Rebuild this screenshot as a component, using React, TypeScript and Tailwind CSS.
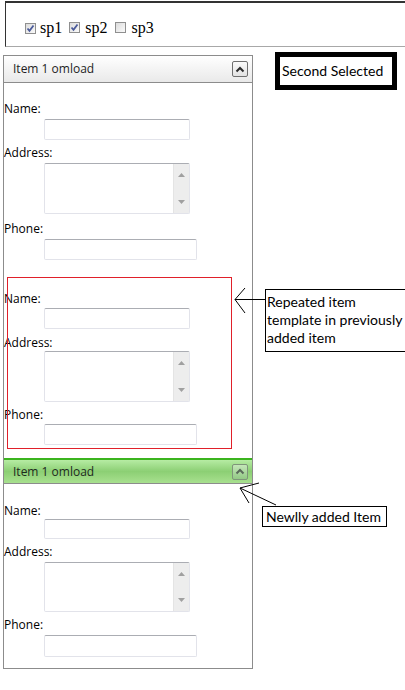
import React from "react";

const sans = { fontFamily: '"Open Sans", "Noto Sans", sans-serif' };

function Check({ checked }: { checked: boolean }) {
  return (
    <span className="relative inline-block w-[11px] h-[11px] border border-[#8f8f8f] bg-gradient-to-br from-[#dcdcdc] to-[#fafafa] shrink-0">
      {checked && (
        <svg className="absolute left-0 top-0" width="9" height="9" viewBox="0 0 9 9">
          <path d="M1.5 4.5 L3.5 6.8 L7.5 1.5" fill="none" stroke="#4a5a9a" strokeWidth="1.8" />
        </svg>
      )}
    </span>
  );
}

function ChevronButton({ green }: { green?: boolean }) {
  return (
    <div
      className={
        green
          ? "w-[16px] h-[16px] rounded-[2px] border border-[#7f957a] bg-gradient-to-b from-[#c4e6b8] to-[#93c985] flex items-center justify-center"
          : "w-[16px] h-[16px] rounded-[2px] border border-[#6f6f6f] bg-gradient-to-b from-[#fbfbfb] to-[#e2e2e2] flex items-center justify-center"
      }
    >
      <svg width="10" height="7" viewBox="0 0 10 7">
        <path d="M1.5 5.5 L5 2 L8.5 5.5" fill="none" stroke={green ? "#5a6a5a" : "#2c2c2c"} strokeWidth="2" />
      </svg>
    </div>
  );
}

function TextBox({ cls }: { cls: string }) {
  return (
    <div
      className={
        "ml-[40px] rounded-[2px] border border-[#e2e3ea] border-t-[#abadb3] bg-white " + cls
      }
    />
  );
}

function TextArea({ cls }: { cls: string }) {
  return (
    <div
      className={
        "ml-[40px] w-[146px] rounded-[2px] border border-[#e2e3ea] border-t-[#abadb3] bg-white flex " + cls
      }
    >
      <div className="flex-1" />
      <div className="w-[16px] bg-[#ededed] border-l border-[#e4e4e4] flex flex-col items-center justify-between py-[9px]">
        <svg width="7" height="4" viewBox="0 0 7 4">
          <path d="M0 4 L3.5 0 L7 4 Z" fill="#a0a0a0" />
        </svg>
        <svg width="7" height="4" viewBox="0 0 7 4">
          <path d="M0 0 L7 0 L3.5 4 Z" fill="#a0a0a0" />
        </svg>
      </div>
    </div>
  );
}

function Fields({ c }: { c: string[] }) {
  return (
    <div className="flex flex-col text-[12px] leading-[16px] text-black" style={sans}>
      <div className={"h-[16px] " + c[0]}>Name:</div>
      <TextBox cls={"w-[146px] " + c[1]} />
      <div className={"h-[16px] " + c[2]}>Address:</div>
      <TextArea cls={c[3]} />
      <div className={"h-[16px] " + c[4]}>Phone:</div>
      <TextBox cls={"w-[153px] " + c[5]} />
    </div>
  );
}

export default function App() {
  return (
    <div className="relative w-[405px] h-[690px] bg-white overflow-hidden">
      {/* top frame */}
      <div className="ml-[5px] mt-[1px] h-[46px] border-t-2 border-l border-[#333333] border-b border-b-[#a8a8a8] flex items-center pl-[19px] pt-[7px]">
        <div
          className="flex items-center text-[16px] leading-[18px] text-black"
          style={{ fontFamily: '"Liberation Serif", "Times New Roman", serif' }}
        >
          <Check checked />
          <span className="ml-[4px]">sp1</span>
          <span className="ml-[7px]">
            <Check checked />
          </span>
          <span className="ml-[5px]">sp2</span>
          <span className="ml-[8px]">
            <Check checked={false} />
          </span>
          <span className="ml-[5px]">sp3</span>
        </div>
      </div>

      <div className="flex items-start">
        {/* panel */}
        <div className="ml-[3px] mt-[8px] w-[250px] border border-[#8c8c8c] relative">
          <div
            className="h-[27px] border-b border-[#8c8c8c] bg-gradient-to-b from-[#ffffff] to-[#e9e9e9] flex items-center justify-between pl-[9px] pr-[4px] text-[12px] text-[#1e1e1e]"
            style={sans}
          >
            <span>Item 1 omload</span>
            <ChevronButton />
          </div>

          <div className="pt-[18px]">
            <Fields c={["", "mt-[2px] h-[21px]", "mt-[5px]", "mt-[2px] h-[51px]", "mt-[7px]", "mt-[2px] h-[21px]"]} />
          </div>

          <div className="mt-[31px] mb-[13px]">
            <Fields c={["", "mt-[1px] h-[21px]", "mt-[6px]", "mt-[0px] h-[51px]", "mt-[5px]", "mt-[1px] h-[21px]"]} />
          </div>

          {/* red overlay frame for repeated template */}
          <div className="absolute left-[3px] top-[221px] w-[225px] h-[172px] border border-[#e0202a] pointer-events-none" />

          <div
            className="h-[26px] border-t-2 border-t-[#3bb41e] border-b border-b-[#8c8c8c] bg-gradient-to-b from-[#b6eca3] via-[#8ccf74] to-[#a8e08f] flex items-center justify-between pl-[9px] pr-[4px] text-[12px] text-[#1e2a1e]"
            style={sans}
          >
            <span>Item 1 omload</span>
            <ChevronButton green />
          </div>

          <div className="pt-[19px] pb-[11px]">
            <Fields c={["", "mt-[0px] h-[20px]", "mt-[5px]", "mt-[2px] h-[50px]", "mt-[5px]", "mt-[2px] h-[22px]"]} />
          </div>
        </div>

        {/* right column */}
        <div
          className="ml-[22px] mt-[5px] w-[122px] h-[38px] border-[5px] border-black flex items-center pl-[2px] pb-[2px] text-[14px] text-black"
          style={{ fontFamily: 'Lato, "Open Sans", sans-serif' }}
        >
          Second Selected
        </div>
      </div>

      {/* annotation boxes */}
      <div
        className="absolute left-[265px] top-[289px] w-[142px] h-[63px] border border-black bg-white pl-[1px] pt-[3px] text-[14px] leading-[18px] text-black whitespace-nowrap overflow-hidden"
        style={{ fontFamily: 'Lato, "Open Sans", sans-serif' }}
      >
        <div>Repeated item</div>
        <div>template in previously</div>
        <div>added item</div>
      </div>

      <div
        className="absolute left-[262px] top-[506px] w-[125px] h-[21px] border border-black bg-white pl-[3px] text-[14px] leading-[19px] text-black whitespace-nowrap"
        style={{ fontFamily: 'Lato, "Open Sans", sans-serif' }}
      >
        Newlly added Item
      </div>

      {/* arrows */}
      <svg className="absolute left-0 top-0 pointer-events-none" width="405" height="690">
        <g stroke="#000" strokeWidth="1" fill="none">
          <path d="M265 299.5 L235 299.5" />
          <path d="M235 299.5 L245 288" />
          <path d="M235 299.5 L245 313" />
          <path d="M240 488 L276 505" />
          <path d="M240 488 L259 483" />
          <path d="M240 488 L249 503" />
        </g>
      </svg>
    </div>
  );
}
